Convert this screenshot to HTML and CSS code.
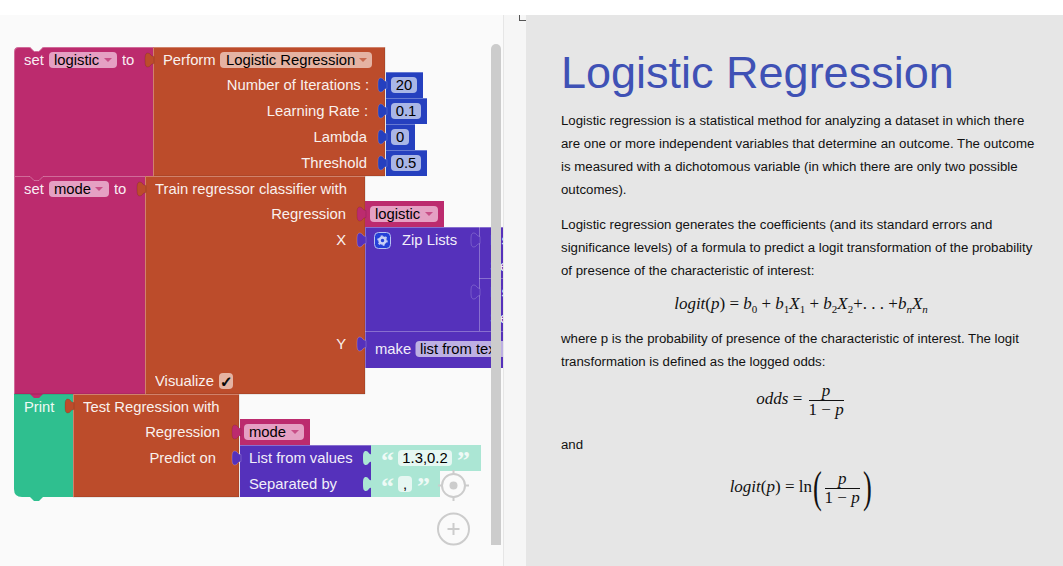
FILE: index.html
```html
<!DOCTYPE html>
<html lang="en">
<head>
    <meta charset="UTF-8">
    <title>Logistic Regression</title>
    <link rel="stylesheet" href="styles.css">
</head>
<body>
    <div class="topbar"></div>
    <div class="main">
        <div class="workspace">
            <svg class="blocks" width="503" height="551" viewBox="0 15 503 551">
                <defs>
                    <path id="tab" d="M1,-3.500 C-2.500,-3.500 -2.500,-7 -5,-7 C-7.500,-7 -8,-5 -8,0 C-8,5 -7.500,7 -5,7 C-2.500,7 -2.500,3.500 1,3.500 Z"/>
                    <path id="arrow" d="M0,0 h8 l-4,4 Z"/>
                </defs>

                <!-- set blocks -->
                <path class="magenta" d="M14,52 Q14,47 19,47 H30 l4,4 h5 l4,-4 H153 V176 H14 Z"/>
                <path class="edge-light" d="M14.500,176 V52 Q14.500,47.500 19,47.500 H30 l4,4 h5 l4,-4 H153"/>
                <rect class="magenta" x="14" y="176" width="131" height="218"/>
                <path class="edge-light" d="M14.500,394 V176.500 H30 l4,4 h5 l4,-4 H145"/>

                <!-- orange value blocks -->
                <rect class="orange" x="153" y="47" width="232" height="129"/>
                <path class="edge-dark" d="M385,47 V176 H153"/>
                <path class="edge-light" d="M153.500,176 V47.500 H385"/>
                <use href="#tab" x="153" y="60" class="orange-tab"/>

                <rect class="orange" x="145" y="176" width="220" height="218"/>
                <path class="edge-dark" d="M365,176 V394 H145"/>
                <path class="edge-light" d="M145.500,394 V176.500 H365"/>
                <use href="#tab" x="145" y="189" class="orange-tab"/>

                <!-- print block -->
                <path class="green" d="M14,394 H73 V497 H43 l-4,4 h-5 l-4,-4 H22 Q14,497 14,489 Z"/>
                <path class="magenta" d="M30,394 l4,4 h5 l4,-4 Z"/>
                <path class="edge-dark" d="M14,394 H145"/>
                <rect class="orange" x="73" y="394" width="166" height="103"/>
                <path class="edge-dark" d="M239,394 V497 H73"/>
                <path class="edge-light" d="M73.500,497 V394.500 H239"/>
                <use href="#tab" x="73" y="406" class="orange-tab"/>

                <!-- number blocks -->
                <rect class="blue" x="386" y="72" width="37" height="26"/>
                <rect class="blue" x="386" y="98" width="41" height="26"/>
                <rect class="blue" x="386" y="124" width="29" height="26"/>
                <rect class="blue" x="386" y="150" width="41" height="26"/>
                <path class="edge-light" d="M386,72.500 H423 M386,98.500 H427 M386,124.500 H415 M386,150.500 H427"/>
                <use href="#tab" x="386" y="85" class="blue-tab"/>
                <use href="#tab" x="386" y="111" class="blue-tab"/>
                <use href="#tab" x="386" y="137" class="blue-tab"/>
                <use href="#tab" x="386" y="163" class="blue-tab"/>

                <!-- train inputs -->
                <rect class="magenta" x="365" y="201" width="79" height="26"/>
                <use href="#tab" x="365" y="214" class="magenta-tab"/>
                <rect class="purple" x="365" y="227" width="138" height="141"/>
                <path class="edge-light" d="M365.500,368 V227.500 H503 M365,331.500 H503 M479.500,227 V331 M479,278.500 H503"/>
                <use href="#tab" x="365" y="240" class="purple-tab"/>
                <use href="#tab" x="365" y="344" class="purple-tab"/>
                <use href="#tab" x="479" y="240" class="purple-tab"/>
                <use href="#tab" x="479" y="292" class="purple-tab"/>

                <!-- test inputs -->
                <rect class="magenta" x="240" y="419" width="70" height="26"/>
                <use href="#tab" x="240" y="432" class="magenta-tab"/>
                <rect class="purple" x="240" y="445" width="131" height="52"/>
                <path class="edge-light" d="M240,445.500 H371"/>
                <use href="#tab" x="240" y="458" class="purple-tab"/>
                <rect class="teal" x="371" y="445" width="110" height="26"/>
                <rect class="teal" x="371" y="471" width="69" height="26"/>
                <use href="#tab" x="371" y="458" class="teal-tab"/>
                <use href="#tab" x="371" y="484" class="teal-tab"/>

                <!-- fields -->
                <rect class="field-magenta" x="49" y="52" width="68" height="16" rx="4"/>
                <rect class="field-orange" x="220" y="52" width="152" height="16" rx="4"/>
                <rect class="field-blue" x="391" y="77" width="26" height="16" rx="4"/>
                <rect class="field-blue" x="391" y="103" width="30" height="16" rx="4"/>
                <rect class="field-blue" x="391" y="129" width="18" height="16" rx="4"/>
                <rect class="field-blue" x="391" y="155" width="30" height="16" rx="4"/>
                <rect class="field-magenta" x="49" y="181" width="60" height="16" rx="4"/>
                <rect class="field-magenta" x="370" y="206" width="68" height="16" rx="4"/>
                <rect class="field-purple" x="415.500" y="341" width="100" height="16" rx="4"/>
                <rect class="field-orange" x="219" y="373" width="14" height="16" rx="4"/>
                <rect class="field-magenta" x="244" y="424" width="60" height="16" rx="4"/>
                <rect class="field-teal" x="398" y="450" width="54" height="16" rx="4"/>
                <rect class="field-teal" x="398" y="476" width="14" height="16" rx="4"/>

                <use href="#arrow" x="104" y="58" class="arrow-magenta"/>
                <use href="#arrow" x="359" y="58" class="arrow-orange"/>
                <use href="#arrow" x="95" y="187" class="arrow-magenta"/>
                <use href="#arrow" x="425" y="212" class="arrow-magenta"/>
                <use href="#arrow" x="291" y="430" class="arrow-magenta"/>

                <!-- labels -->
                <text class="label" x="24" y="65">set</text>
                <text class="value" x="54" y="65">logistic</text>
                <text class="label" x="122" y="65">to</text>
                <text class="label" x="163" y="65">Perform</text>
                <text class="value" x="226" y="65">Logistic Regression</text>
                <text class="label right" x="369" y="90">Number of Iterations :</text>
                <text class="label right" x="368" y="116">Learning Rate :</text>
                <text class="label right" x="367" y="142">Lambda</text>
                <text class="label right" x="367" y="168">Threshold</text>
                <text class="value mid" x="404" y="90">20</text>
                <text class="value mid" x="406" y="116">0.1</text>
                <text class="value mid" x="400" y="142">0</text>
                <text class="value mid" x="406" y="168">0.5</text>

                <text class="label" x="24" y="194">set</text>
                <text class="value" x="54" y="194">mode</text>
                <text class="label" x="114" y="194">to</text>
                <text class="label" x="155" y="194">Train regressor classifier with</text>
                <text class="label right" x="346" y="219">Regression</text>
                <text class="value" x="375" y="219">logistic</text>
                <text class="label right" x="346" y="245">X</text>
                <text class="label right" x="346" y="349">Y</text>
                <text class="label" x="402" y="245">Zip Lists</text>
                <text class="label" x="490" y="245">List</text>
                <text class="label" x="490" y="271">Separated</text>
                <text class="label" x="490" y="297">List</text>
                <text class="label" x="490" y="323">Separated</text>
                <text class="label" x="375" y="354">make</text>
                <text class="value" x="420" y="354">list from text</text>
                <text class="label" x="155" y="386">Visualize</text>
                <text class="check" x="220" y="386.500">✓</text>

                <text class="label" x="24" y="412">Print</text>
                <text class="label" x="83" y="412">Test Regression with</text>
                <text class="label right" x="220" y="437">Regression</text>
                <text class="label right" x="216" y="463">Predict on</text>
                <text class="value" x="249" y="437">mode</text>
                <text class="label" x="249" y="463">List from values</text>
                <text class="label" x="249" y="489">Separated by</text>
                <text class="quote" x="381" y="469">“</text>
                <text class="value mid" x="425" y="463">1.3,0.2</text>
                <text class="quote" x="457" y="469">”</text>
                <text class="quote" x="381" y="495">“</text>
                <text class="value mid" x="405" y="489">,</text>
                <text class="quote" x="417" y="495">”</text>

                <!-- mutator icon -->
                <rect class="gear-box" x="374.500" y="232.500" width="16" height="16" rx="4"/>
                <circle class="gear-ring" cx="382.500" cy="240.500" r="3"/>
                <circle class="gear-teeth" cx="382.500" cy="240.500" r="4.500"/>

                <!-- scrollbar and controls -->
                <path class="scroll" d="M491,49 a5,5 0 0 1 10,0 V545 H491 Z"/>
                <circle class="ctl-ring" cx="453.500" cy="485.500" r="11.500"/>
                <circle class="ctl-dot" cx="453.500" cy="485.500" r="4"/>
                <path class="ctl-line" d="M453.500,470 v4 M453.500,497 v4 M438,485.500 h4 M465,485.500 h4"/>
                <circle class="ctl-ring" cx="453.500" cy="529" r="15.500"/>
                <path class="ctl-line" d="M453.500,523 v12 M447.500,529 h12"/>
            </svg>
        </div>
        <div class="gutter"><span class="corner"></span></div>
        <div class="doc">
            <h1>Logistic Regression</h1>
            <p>Logistic regression is a statistical method for analyzing a dataset in which there are one or more independent variables that determine an outcome. The outcome is measured with a dichotomous variable (in which there are only two possible outcomes).</p>
            <p>Logistic regression generates the coefficients (and its standard errors and significance levels) of a formula to predict a logit transformation of the probability of presence of the characteristic of interest:</p>
            <div class="eq eq-one"><i>logit</i>(<i>p</i>) = <i>b</i><sub>0</sub> + <i>b</i><sub>1</sub><i>X</i><sub>1</sub> + <i>b</i><sub>2</sub><i>X</i><sub>2</sub>+. . . +<i>b<sub>n</sub>X<sub>n</sub></i></div>
            <p>where p is the probability of presence of the characteristic of interest. The logit transformation is defined as the logged odds:</p>
            <div class="eq eq-two"><i>odds</i> = <span class="frac"><i class="num">p</i><span class="den">1 − <i>p</i></span></span></div>
            <p class="and">and</p>
            <div class="eq eq-three"><i>logit</i>(<i>p</i>) = ln<span class="paren">(</span><span class="frac"><i class="num">p</i><span class="den">1 − <i>p</i></span></span><span class="paren">)</span></div>
        </div>
    </div>
</body>
</html>
```

FILE: styles.css
```css
html, body {
  margin: 0;
  height: 100%;
  overflow: hidden;
  background: #fff;
}

.topbar {
  height: 15px;
}

.main {
  display: flex;
  height: 551px;
}

.workspace {
  width: 503px;
  background: #fafafa;
  border-right: 1px solid #e6e6e6;
}

.blocks {
  display: block;
}

.gutter {
  position: relative;
  width: 22px;
  background: #f6f6f6;
}

.corner {
  position: absolute;
  left: 15px;
  top: 0;
  width: 6px;
  height: 5px;
  border-left: 1px solid #555;
  border-bottom: 1px solid #555;
}

/* block colours */
.orange { fill: #bc4c2b; }
.magenta { fill: #bc2b6e; }
.green { fill: #2fbf8f; }
.blue { fill: #2540bf; }
.purple { fill: #5531bb; }
.teal { fill: #abe6d4; }

.orange-tab { fill: #bc4c2b; stroke: rgba(0, 0, 0, 0.12); }
.magenta-tab { fill: #bc2b6e; stroke: rgba(0, 0, 0, 0.1); }
.blue-tab { fill: #2540bf; stroke: rgba(255, 255, 255, 0.15); }
.purple-tab { fill: #5531bb; stroke: rgba(255, 255, 255, 0.2); }
.teal-tab { fill: #abe6d4; }

.edge-light {
  fill: none;
  stroke: rgba(255, 255, 255, 0.3);
}

.edge-dark {
  fill: none;
  stroke: rgba(0, 0, 0, 0.15);
}

.field-magenta { fill: #e5a0c3; }
.field-orange { fill: #e5b3a3; }
.field-blue { fill: #a9b6e6; }
.field-purple { fill: #bdb0e3; }
.field-teal { fill: #e6f7f2; }

.arrow-magenta { fill: #bc2b6e; opacity: 0.7; }
.arrow-orange { fill: #bc4c2b; opacity: 0.7; }

.label, .value {
  font-family: "Liberation Sans", Arial, sans-serif;
  font-size: 14.800px;
}

.label { fill: #fff; opacity: 0.92; }
.value { fill: #000; }
.right { text-anchor: end; }
.mid { text-anchor: middle; }
.check { font-family: "DejaVu Sans", sans-serif; font-size: 15px; fill: #000; stroke: #000; stroke-width: 0.600; }

.quote {
  font-family: "Liberation Serif", serif;
  font-size: 26px;
  font-weight: bold;
  fill: #eefaf6;
}

.gear-box { fill: #2540d8; stroke: #b9c2f2; }
.gear-ring { fill: none; stroke: #c8cff5; stroke-width: 2.500; }
.gear-teeth { fill: none; stroke: #c8cff5; stroke-width: 1.500; stroke-dasharray: 2 2.700; }

.scroll { fill: #ccc; }
.ctl-ring { fill: none; stroke: #ccc; stroke-width: 2; }
.ctl-dot { fill: #ccc; }
.ctl-line { fill: none; stroke: #ccc; stroke-width: 2; }

/* doc panel */
.doc {
  flex: 1;
  background: #e6e6e6;
  padding: 28px 22px 0 35px;
  font-family: "Liberation Sans", Arial, sans-serif;
  font-size: 13.250px;
  line-height: 23px;
  color: #111;
}

.doc h1 {
  margin: 0 0 6px;
  font-size: 45px;
  font-weight: normal;
  line-height: 60px;
  color: #3f51b5;
}

.doc p {
  margin: 0 0 12px;
}

.eq {
  font-family: "Liberation Serif", serif;
  font-size: 17px;
  line-height: 20px;
  text-align: center;
  white-space: nowrap;
}

.eq sub {
  font-size: 11px;
  line-height: 0;
}

.eq-one { margin-bottom: 13px; }
.eq-two { margin: -3px 0 14px; }
.eq-three { margin-top: 12px; }

.frac {
  display: inline-flex;
  flex-direction: column;
  vertical-align: middle;
  line-height: 18px;
  text-align: center;
  margin: 0 2px;
}

.num {
  border-bottom: 1px solid #111;
  padding: 0 2px;
}

.paren {
  display: inline-block;
  font-size: 44px;
  font-weight: normal;
  line-height: 40px;
  vertical-align: middle;
  transform: scaleX(0.6);
  margin: 0 -2px;
}
```
